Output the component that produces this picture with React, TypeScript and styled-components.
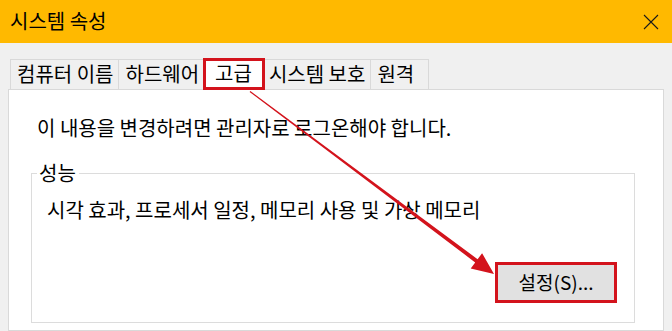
import React from "react";
import styled, { createGlobalStyle } from "styled-components";

const GlobalStyle = createGlobalStyle`
  html, body {
    margin: 0;
    padding: 0;
    background: #f0f0f0;
  }
  body {
    font-family: "Noto Sans CJK KR", "Malgun Gothic", sans-serif;
  }
`;

const Window = styled.div`
  position: relative;
  width: 672px;
  height: 331px;
  overflow: hidden;
  display: flex;
  flex-direction: column;
  background: #f0f0f0;
  color: #000;
  font-size: 20px;
`;

const TitleBar = styled.div`
  height: 43px;
  flex-shrink: 0;
  display: flex;
  align-items: center;
  justify-content: space-between;
  padding: 0 13px 0 10px;
  background: #ffb900;
`;

const Title = styled.span`
  font-size: 20px;
  line-height: 24px;
  margin-top: -1px;
`;

const CloseButton = styled.div`
  width: 16px;
  height: 16px;
  display: flex;
`;

const Body = styled.div`
  flex: 1;
  display: flex;
  flex-direction: column;
  padding: 16px 8px 0 8px;
`;

const TabStrip = styled.div`
  height: 30px;
  display: flex;
  align-items: flex-end;
  padding-left: 2px;
  position: relative;
  z-index: 1;
`;

const Tab = styled.div<{ $active?: boolean }>`
  box-sizing: border-box;
  display: flex;
  align-items: center;
  min-width: 59px;
  height: ${(p) => (p.$active ? "32px" : "30px")};
  margin-bottom: ${(p) => (p.$active ? "-1px" : "0")};
  margin-left: ${(p) => (p.$active ? "-2px" : "-1px")};
  margin-right: ${(p) => (p.$active ? "-2px" : "0")};
  padding: ${(p) => (p.$active ? "0 10px 2px 9px" : "0 5px 1px 6px")};
  background: ${(p) => (p.$active ? "#fff" : "#f0f0f0")};
  border: ${(p) => (p.$active ? "3px solid #d3131c" : "1px solid #d9d9d9")};
  border-bottom: ${(p) => (p.$active ? "3px solid #d3131c" : "none")};
  position: relative;
  z-index: ${(p) => (p.$active ? 2 : 0)};
  white-space: nowrap;
  line-height: 24px;
  &:first-child {
    margin-left: 0;
  }
`;

const Panel = styled.div`
  flex: 1;
  background: #fff;
  border: 1px solid #d9d9d9;
  padding: 26px 28px 0 28px;
  display: flex;
  flex-direction: column;
`;

const Notice = styled.p`
  margin: 0;
  line-height: 24px;
`;

const Group = styled.fieldset`
  margin: 21px 0 0 -6px;
  padding: 0 17px 19px 15px;
  border: 1px solid #dcdcdc;
  display: flex;
  flex-direction: column;
  min-width: 0;
`;

const GroupLabel = styled.legend`
  margin-left: -10px;
  padding: 0 3px 0 2px;
  line-height: 24px;
`;

const GroupText = styled.p`
  margin: 13px 0 0 0;
  line-height: 24px;
`;

const ButtonRow = styled.div`
  display: flex;
  justify-content: flex-end;
  margin-top: 40px;
`;

const Button = styled.button`
  box-sizing: border-box;
  width: 122px;
  height: 41px;
  background: #e1e1e1;
  border: 3px solid #d3131c;
  font-family: inherit;
  font-size: 19px;
  color: #000;
  padding: 0 0 2px 0;
`;

const Overlay = styled.svg`
  position: absolute;
  left: 0;
  top: 0;
  pointer-events: none;
  z-index: 5;
`;

const tabs = ["컴퓨터 이름", "하드웨어", "고급", "시스템 보호", "원격"];

export default function App() {
  return (
    <>
      <GlobalStyle />
      <Window>
        <TitleBar>
          <Title>시스템 속성</Title>
          <CloseButton>
            <svg width="16" height="16" viewBox="0 0 16 16">
              <path d="M1 1 L15 15 M15 1 L1 15" stroke="#1a1a1a" strokeWidth="1.1" fill="none" />
            </svg>
          </CloseButton>
        </TitleBar>
        <Body>
          <TabStrip>
            {tabs.map((t) => (
              <Tab key={t} $active={t === "고급"}>
                {t}
              </Tab>
            ))}
          </TabStrip>
          <Panel>
            <Notice>이 내용을 변경하려면 관리자로 로그온해야 합니다.</Notice>
            <Group>
              <GroupLabel>성능</GroupLabel>
              <GroupText>시각 효과, 프로세서 일정, 메모리 사용 및 가상 메모리</GroupText>
              <ButtonRow>
                <Button>설정(S)...</Button>
              </ButtonRow>
            </Group>
          </Panel>
        </Body>
        <Overlay width="672" height="331" viewBox="0 0 672 331">
          <polygon
            points="250.4,91 477.6,259.2 482.1,253.2 494,274 470.7,268.4 475.2,262.4 249.6,92"
            fill="#d3131c"
          />
        </Overlay>
      </Window>
    </>
  );
}
